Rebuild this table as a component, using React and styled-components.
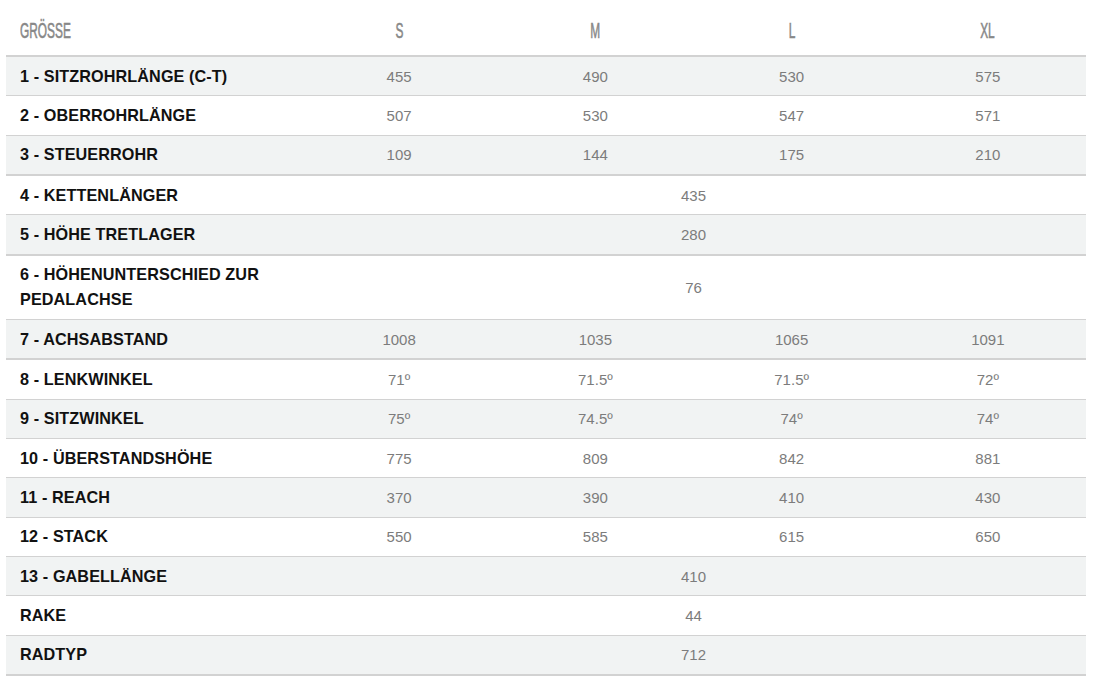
import React from 'react';
import styled, { createGlobalStyle } from 'styled-components';

const GlobalStyle = createGlobalStyle`
    body {
        margin: 0;
        background: #fff;
        font-family: "Liberation Sans", Arial, sans-serif;
    }
`;

const Wrapper = styled.div`
    padding: 0 30px 0 6px;
`;

const Table = styled.table`
    width: 1080px;
    border-collapse: collapse;
    table-layout: fixed;
`;

const HeadCell = styled.th`
    box-sizing: border-box;
    height: 56px;
    padding: 7px 0 0 0;
    padding-left: ${(p) => (p.$left ? '14px' : '0')};
    font-family: "Liberation Sans", Arial, sans-serif;
    font-weight: 400;
    font-size: 22px;
    color: #888;
    text-align: ${(p) => (p.$left ? 'left' : 'center')};
    border-bottom: 2px solid #d2d2d2;
    width: ${(p) => (p.$left ? '295px' : 'auto')};
`;

const HeadText = styled.span`
    display: inline-block;
    transform: scaleX(0.54);
    transform-origin: ${(p) => (p.$left ? 'left center' : 'center center')};
    -webkit-text-stroke: 0.6px #888;
`;

const Row = styled.tr`
    background: ${(p) => (p.$shade ? '#f1f3f3' : '#fff')};
    border-bottom: ${(p) => (p.$thick ? '2px' : '1px')} solid #d2d2d2;
`;

const Label = styled.td`
    padding: 6.68px 0 6.68px 14px;
    line-height: 25px;
    font-size: 16.2px;
    font-weight: 700;
    color: #111;
    letter-spacing: 0.1px;
`;

const Value = styled.td`
    padding: 6.68px 0;
    line-height: 25px;
    font-size: 15px;
    color: #7c7c7c;
    text-align: center;
`;

const rows = [
    { label: '1 - SITZROHRLÄNGE (C-T)', values: ['455', '490', '530', '575'] },
    { label: '2 - OBERROHRLÄNGE', values: ['507', '530', '547', '571'] },
    { label: '3 - STEUERROHR', values: ['109', '144', '175', '210'], thick: true },
    { label: '4 - KETTENLÄNGER', values: ['435'] },
    { label: '5 - HÖHE TRETLAGER', values: ['280'], thick: true },
    { label: <>6 - HÖHENUNTERSCHIED ZUR<br />PEDALACHSE</>, values: ['76'] },
    { label: '7 - ACHSABSTAND', values: ['1008', '1035', '1065', '1091'], thick: true },
    { label: '8 - LENKWINKEL', values: ['71º', '71.5º', '71.5º', '72º'] },
    { label: '9 - SITZWINKEL', values: ['75º', '74.5º', '74º', '74º'] },
    { label: '10 - ÜBERSTANDSHÖHE', values: ['775', '809', '842', '881'] },
    { label: '11 - REACH', values: ['370', '390', '410', '430'] },
    { label: '12 - STACK', values: ['550', '585', '615', '650'] },
    { label: '13 - GABELLÄNGE', values: ['410'] },
    { label: 'RAKE', values: ['44'] },
    { label: 'RADTYP', values: ['712'], thick: true },
];

const sizes = ['S', 'M', 'L', 'XL'];

const App = () => {
    return (
        <Wrapper>
            <GlobalStyle />
            <Table>
                <thead>
                    <tr>
                        <HeadCell $left><HeadText $left>GRÖSSE</HeadText></HeadCell>
                        {sizes.map((s) => (
                            <HeadCell key={s}><HeadText>{s}</HeadText></HeadCell>
                        ))}
                    </tr>
                </thead>
                <tbody>
                    {rows.map((row, i) => (
                        <Row key={i} $shade={i % 2 === 0} $thick={row.thick}>
                            <Label>{row.label}</Label>
                            {row.values.length === 1 ? (
                                <Value colSpan={4}>{row.values[0]}</Value>
                            ) : (
                                row.values.map((v, j) => <Value key={j}>{v}</Value>)
                            )}
                        </Row>
                    ))}
                </tbody>
            </Table>
        </Wrapper>
    );
};

export default App;
